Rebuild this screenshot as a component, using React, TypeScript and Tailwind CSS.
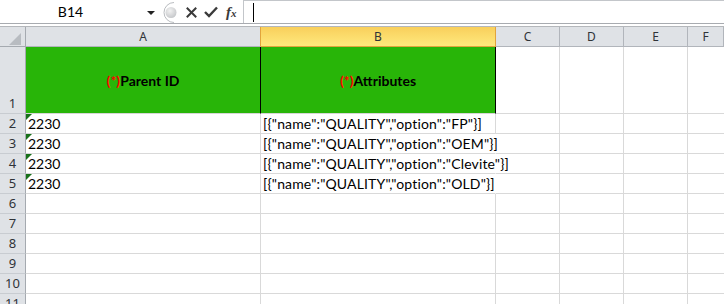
import React from "react";

const dataRows: { a?: string; b?: string; spill?: boolean }[] = [
  { a: "2230", b: '[{"name":"QUALITY","option":"FP"}]' },
  { a: "2230", b: '[{"name":"QUALITY","option":"OEM"}]', spill: true },
  { a: "2230", b: '[{"name":"QUALITY","option":"Clevite"}]', spill: true },
  { a: "2230", b: '[{"name":"QUALITY","option":"OLD"}]', spill: true },
  {},
  {},
  {},
  {},
  {},
  {},
];

const cellFont = "font-['Lato',_sans-serif] text-[14px] text-black";
const hdrFont = "font-['Noto_Sans',_sans-serif] text-[12px] text-[#2f3338]";

function ColHeader({ label, selected }: { label: string; selected?: boolean }) {
  if (selected) {
    return (
      <div
        className={`flex items-center justify-center border-r border-b border-r-[#e2a43c] border-b-[#e2a43c] bg-gradient-to-b from-[#f9cf5b] to-[#fee97d] ${hdrFont}`}
      >
        {label}
      </div>
    );
  }
  return (
    <div
      className={`flex items-center justify-center border-r border-b border-r-[#b1b5bb] border-b-[#b1b5bb] bg-[#dfe2e6] ${hdrFont} ${
        label === "A" ? "border-r-[#e2a43c]" : ""
      }`}
    >
      {label}
    </div>
  );
}

function RowHeader({ n, bottom }: { n: number; bottom?: boolean }) {
  return (
    <div
      className={`flex ${bottom ? "items-end" : "items-center"} justify-center border-r border-b border-r-[#a5aab0] border-b-[#c8ccd1] bg-[#dfe2e6] ${hdrFont} text-[13px]`}
    >
      {n}
    </div>
  );
}

function GreenTri() {
  return (
    <svg className="absolute left-0 top-0" width="7" height="7" viewBox="0 0 7 7">
      <polygon points="0,0 6,0 0,6" fill="#17711a" />
    </svg>
  );
}

export default function App() {
  return (
    <div className="w-[724px] h-[304px] overflow-hidden bg-white">
      {/* Formula bar */}
      <div className="flex h-[24px] border-b border-[#a8abb0]">
        <div className="relative flex w-[160px] items-center">
          <div className="w-[141px] text-center font-['Lato',_sans-serif] text-[14px] text-black">B14</div>
          <svg className="absolute left-[147px] top-[11px]" width="8" height="5" viewBox="0 0 8 5">
            <polygon points="0,0 8,0 4,4" fill="#222" />
          </svg>
        </div>
        <div className="relative flex w-[83px] items-center">
          <svg className="absolute left-0 top-[2px]" width="24" height="21" viewBox="0 0 24 21">
            <defs>
              <radialGradient id="g" cx="0.4" cy="0.35" r="0.7">
                <stop offset="0" stopColor="#f2f2f2" />
                <stop offset="1" stopColor="#c4c6c9" />
              </radialGradient>
            </defs>
            <path d="M14 0.5 A10 10 0 0 0 14 20.5" fill="none" stroke="#b9bcc0" strokeWidth="1" />
            <circle cx="11" cy="10.5" r="5.5" fill="url(#g)" />
          </svg>
          <svg className="absolute left-[26px] top-[7px]" width="11" height="11" viewBox="0 0 11 11">
            <path d="M1.5 1.5 L9.5 9.5 M9.5 1.5 L1.5 9.5" stroke="#3a3a3a" strokeWidth="2" strokeLinecap="square" />
          </svg>
          <svg className="absolute left-[44px] top-[6px]" width="14" height="12" viewBox="0 0 14 12">
            <path d="M1 6 L5 10 L13 1.5" stroke="#3a3a3a" strokeWidth="2.4" fill="none" />
          </svg>
          <span className="absolute left-[66px] top-[1px] font-['Liberation_Serif',_serif] text-[15px] font-bold italic text-[#3a3a3a]">
            f<span className="text-[11px]">x</span>
          </span>
        </div>
        <div className="relative flex-1 border-l border-t border-[#c3c6ca]">
          <div className="absolute left-[9px] top-[2px] h-[19px] w-px bg-black" />
        </div>
      </div>
      <div className="h-[3px] border-b border-[#b4b7bb]" />

      {/* Sheet grid */}
      <div className="grid grid-cols-[26px_235px_235px_64px_64px_64px_1fr] grid-rows-[20px_67px_repeat(10,20px)]">
        <div className="relative border-r border-b border-[#a5aab0] bg-[#dfe2e6]">
          <svg className="absolute left-[9px] top-[6px]" width="12" height="12" viewBox="0 0 12 12">
            <polygon points="12,0 12,12 0,12" fill="#b8bcc1" />
          </svg>
        </div>
        <ColHeader label="A" />
        <ColHeader label="B" selected />
        <ColHeader label="C" />
        <ColHeader label="D" />
        <ColHeader label="E" />
        <ColHeader label="F" />

        <RowHeader n={1} bottom />
        <div className={`flex items-center justify-center border-r border-b border-r-black border-b-[#d6d6d6] bg-[#28b508] font-bold ${cellFont}`}>
          <span className="text-[#ff0000]">(*)</span>Parent ID
        </div>
        <div className={`flex items-center justify-center border-r border-b border-r-black border-b-[#d6d6d6] bg-[#28b508] font-bold ${cellFont}`}>
          <span className="text-[#ff0000]">(*)</span>Attributes
        </div>
        <div className="border-r border-b border-[#d9d9d9]" />
        <div className="border-r border-b border-[#d9d9d9]" />
        <div className="border-r border-b border-[#d9d9d9]" />
        <div className="border-b border-[#d9d9d9]" />

        {dataRows.map((r, i) => (
          <React.Fragment key={i}>
            <RowHeader n={i + 2} />
            <div className={`relative flex items-center border-r border-b border-[#d9d9d9] pl-[2px] ${cellFont}`}>
              {r.a && <GreenTri />}
              {r.a}
            </div>
            <div
              className={`relative z-10 flex items-center whitespace-nowrap border-b border-b-[#d9d9d9] pl-[2px] tracking-[0.15px] ${cellFont} ${
                r.spill ? "border-r border-r-white" : "border-r border-r-[#d9d9d9]"
              }`}
            >
              {r.b}
            </div>
            <div className="border-r border-b border-[#d9d9d9]" />
            <div className="border-r border-b border-[#d9d9d9]" />
            <div className="border-r border-b border-[#d9d9d9]" />
            <div className="border-b border-[#d9d9d9]" />
          </React.Fragment>
        ))}
      </div>
    </div>
  );
}
